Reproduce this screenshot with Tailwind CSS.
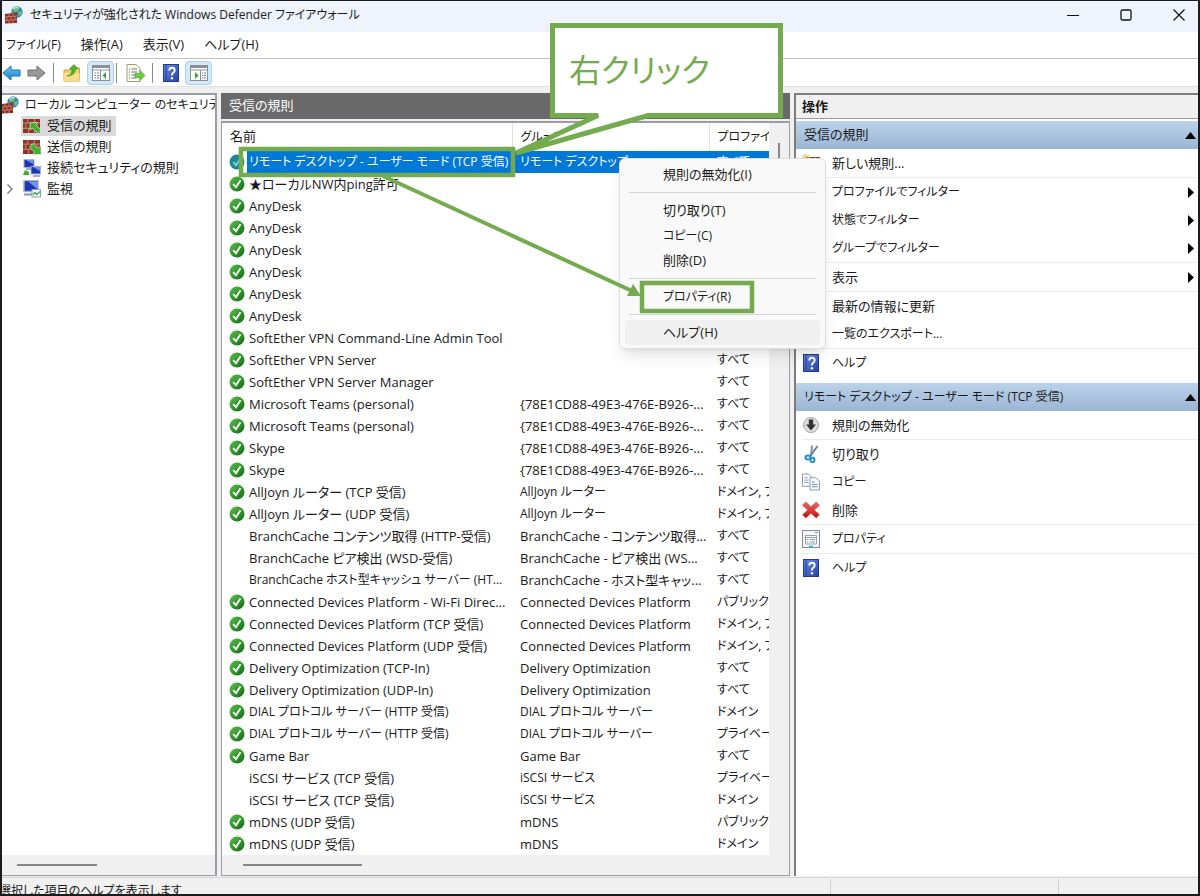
<!doctype html>
<html lang="ja">
    <head>
        <meta charset="UTF-8" />
        <meta name="viewport" content="width=device-width, initial-scale=1.0" />
        <title>セキュリティが強化された Windows Defender ファイアウォール</title>
        <script src="https://cdn.jsdelivr.net/npm/@tailwindcss/browser@4"></script>
        <style>
            body {
                font-family: "Open Sans", "Noto Sans CJK JP", sans-serif;
                font-feature-settings: "palt";
            }
        </style>
    </head>
    <body class="bg-[#f0f0f0] text-[13px] text-[#1a1a1a]">
        <!-- Icon sprites -->
        <svg class="absolute size-0">
            <defs>
                <linearGradient id="greenGrad" x1="0" y1="0" x2="1" y2="1">
                    <stop offset="0" stop-color="#5cc04c" />
                    <stop offset="1" stop-color="#0e6a12" />
                </linearGradient>
                <linearGradient id="blueGrad" x1="0" y1="0" x2="0" y2="1">
                    <stop offset="0" stop-color="#6cc8f6" />
                    <stop offset="1" stop-color="#1a7fcb" />
                </linearGradient>
                <linearGradient id="helpGrad" x1="0" y1="0" x2="1" y2="1">
                    <stop offset="0" stop-color="#6c8fe0" />
                    <stop offset="1" stop-color="#2440a8" />
                </linearGradient>
                <linearGradient id="redGrad" x1="0" y1="0" x2="0" y2="1">
                    <stop offset="0" stop-color="#ee6a64" />
                    <stop offset="1" stop-color="#c00d10" />
                </linearGradient>
            </defs>
            <symbol id="bricks" viewBox="0 0 18 12" preserveAspectRatio="none">
                <rect width="18" height="12" fill="#8c3527" />
                <path d="M0 3.5H18M0 8H18M5 0V3.5M12 0V3.5M3 3.5V8M9 3.5V8M15 3.5V8M6 8V12M12 8V12" stroke="#cf9c8c" stroke-width="0.8" />
            </symbol>
            <symbol id="firewall" viewBox="0 0 18 18">
                <circle cx="12" cy="6" r="5.7" fill="#2f86b8" />
                <path d="M9 2q3-2 5 0l-1 3-3 1-2-1zM13 6l4-1-1 4-2 1z" fill="#7cc26a" />
                <path d="M8 3q3-3 6-1" stroke="#d8f0f8" fill="none" />
                <path d="M0 8L12 6.500V17L0 17.500Z" fill="#8c2f22" />
                <path d="M0 11L12 10M0 14.500L12 13.500M4 8V11M8 7V10.500M2 11V14.500M6 11V14M10 10V13.500M4 14.500V17M8 14V17" stroke="#d39a8a" stroke-width="0.7" />
            </symbol>
            <symbol id="inbound" viewBox="0 0 18 16">
                <use href="#bricks" x="0" y="1" width="17" height="14" />
                <path d="M7 4.500L14.500 4.500L12.500 6.500L18 12L14.500 15.500L9.500 10L7 12Z" fill="#3db02e" stroke="#d9f2d2" stroke-width="0.7" />
            </symbol>
            <symbol id="outbound" viewBox="0 0 18 16">
                <use href="#bricks" x="0" y="1" width="17" height="14" />
                <path d="M18 15.500L9.500 15.500L11.500 13L6.500 8L10 4.500L15 9.500L18 6.500Z" fill="#3db02e" stroke="#d9f2d2" stroke-width="0.7" />
            </symbol>
            <symbol id="connection" viewBox="0 0 18 18">
                <rect x="1" y="0.500" width="10" height="8" fill="#1d37b4" stroke="#a9b2c4" />
                <path d="M3 1H10V5Z" fill="#6f93ee" />
                <path d="M3 10H9" stroke="#8b93a5" stroke-width="1.500" />
                <rect x="8" y="7.500" width="9.500" height="7.500" fill="#1d37b4" stroke="#a9b2c4" />
                <path d="M10 8H17V12Z" fill="#6f93ee" />
                <path d="M10 17H17" stroke="#8b93a5" stroke-width="1.500" />
                <path d="M0 16L2 11L6 13L6 16Z" fill="#3db02e" />
            </symbol>
            <symbol id="monitor" viewBox="0 0 18 18">
                <rect x="1" y="0.500" width="14" height="11" fill="#1d37b4" stroke="#a9b2c4" stroke-width="1.500" />
                <path d="M5 1.500H14.500V9Z" fill="#6f93ee" />
                <path d="M1 14.500H9" stroke="#8b93a5" stroke-width="2" />
                <rect x="9" y="9.500" width="8.500" height="7.500" fill="#f4faf4" stroke="#8fa3b5" />
                <path d="M10 14.500L12 12.500L14 14.500L17 11.500" stroke="#35a043" fill="none" stroke-width="1.200" />
            </symbol>
            <symbol id="check" viewBox="0 0 16 16">
                <circle cx="8" cy="8" r="7.500" fill="url(#greenGrad)" />
                <path d="M4.200 8.200L7 11.300L11.500 4.300" fill="none" stroke="#fff" stroke-width="1.900" />
            </symbol>
            <symbol id="checkSelected" viewBox="0 0 16 16">
                <circle cx="8" cy="8" r="7.500" fill="#1b8795" />
                <path d="M4.200 8.200L7 11.300L11.500 4.300" fill="none" stroke="#8fd0e0" stroke-width="1.900" />
            </symbol>
            <symbol id="book" viewBox="0 0 16 18">
                <rect x="0.500" y="0.500" width="15" height="17" fill="url(#helpGrad)" stroke="#24388c" />
                <path d="M3 1V17" stroke="#1f3a9c" />
                <path d="M6.300 6.500Q6.300 3.800 9 3.800T11.700 6.200Q11.700 7.700 10.200 8.700T9 11.500" fill="none" stroke="#fff" stroke-width="1.900" />
                <circle cx="9" cy="14.200" r="1.200" fill="#fff" />
            </symbol>
            <symbol id="arrowRight" viewBox="0 0 19 16">
                <path d="M1 5H10V1L18 8L10 15V11H1Z" fill="#999" stroke="#6e6e6e" />
            </symbol>
            <symbol id="arrowLeft" viewBox="0 0 19 16">
                <path d="M18 5H9V1L1 8L9 15V11H18Z" fill="url(#blueGrad)" stroke="#1c6fae" />
            </symbol>
            <symbol id="folderUp" viewBox="0 0 18 18">
                <path d="M1 6H7L8 4H16.500V17H1Z" fill="#f3cf6d" stroke="#c9a042" />
                <path d="M1 9H16.500V17H1Z" fill="#f9dd8c" />
                <path d="M4 12Q9 11 9 5H6.500L11 0.500L15 5H12.500Q12 12 4 12Z" fill="#4db52b" stroke="#328a18" stroke-width="0.600" />
            </symbol>
            <symbol id="paneLeft" viewBox="0 0 18 16">
                <rect x="0.500" y="0.500" width="17" height="15" fill="#fff" stroke="#8b8f96" />
                <path d="M1 2H17" stroke="#8b8f96" stroke-width="2" />
                <path d="M1 5H17M8.500 5V15" stroke="#8b8f96" />
                <path d="M2.500 8H4M5 8H7M2.500 10.500H4M5 10.500H7M2.500 13H4M5 13H7" stroke="#5c78a8" />
                <path d="M14 7V14L10.500 10.500Z" fill="#38a52c" />
            </symbol>
            <symbol id="paneRight" viewBox="0 0 18 16">
                <rect x="0.500" y="0.500" width="17" height="15" fill="#fff" stroke="#8b8f96" />
                <path d="M1 2H17" stroke="#8b8f96" stroke-width="2" />
                <path d="M1 5H17M10.500 5V15" stroke="#8b8f96" />
                <path d="M12 8H13.200M14 8H16M12 10.500H13.200M14 10.500H16M12 13H13.200M14 13H16" stroke="#5c78a8" />
                <path d="M5 7V14L8.500 10.500Z" fill="#38a52c" />
            </symbol>
            <symbol id="exportList" viewBox="0 0 20 18">
                <path d="M1 0.500H10L14 4V17.500H1Z" fill="#fffdee" stroke="#a09d86" />
                <path d="M3 5H4M5.500 5H11M3 8H4M5.500 8H11M3 11H4M5.500 11H10M3 14H4M5.500 14H10" stroke="#63718a" />
                <path d="M9 9.500H14V6.500L19 11.500L14 16.500V13.500H9Z" fill="#6fcf42" stroke="#47a41f" stroke-width="0.700" />
            </symbol>
            <symbol id="newRule" viewBox="0 0 18 18">
                <use href="#bricks" x="3" y="3" width="15" height="12" />
                <path d="M4 0V8M0 4H8M1 1L7 7M7 1L1 7" stroke="#f2a71f" />
            </symbol>
            <symbol id="disable" viewBox="0 0 18 18">
                <circle cx="9" cy="9" r="7.500" fill="#dcdcdc" stroke="#a8a8a8" />
                <path d="M6.800 3.500H11.200V8.500H14L9 14.500L4 8.500H6.800Z" fill="#333" />
            </symbol>
            <symbol id="cut" viewBox="0 0 18 18">
                <path d="M10 0.500L9 11" stroke="#8494a5" stroke-width="2" />
                <path d="M15.500 1L8 11.500" stroke="#68788c" stroke-width="1.800" />
                <ellipse cx="6" cy="12.500" rx="2.500" ry="2" fill="none" stroke="#1e90d2" stroke-width="2" />
                <ellipse cx="10.500" cy="15" rx="2" ry="2.200" fill="none" stroke="#1e90d2" stroke-width="2" />
            </symbol>
            <symbol id="copy" viewBox="0 0 19 18">
                <path d="M0.500 0.500H7L10.500 4V13.500H0.500Z" fill="#fff" stroke="#8d949c" />
                <path d="M2.500 4.500H6M2.500 7H7M2.500 9.500H7" stroke="#6f9bd2" />
                <path d="M8.500 4.500H14.500L18.500 8V17.500H8.500Z" fill="#fff" stroke="#8d949c" />
                <path d="M10.500 9H13.500M10.500 11.500H16.500M10.500 14H16.500" stroke="#4d86cc" />
            </symbol>
            <symbol id="delete" viewBox="0 0 19 18">
                <path d="M4 0.500L9.500 5.500L15 0.500L18.500 4L13 9L18.500 14L15 17.500L9.500 12.500L4 17.500L0.500 14L6 9L0.500 4Z" fill="url(#redGrad)" stroke="#d0433f" stroke-width="0.600" />
            </symbol>
            <symbol id="props" viewBox="0 0 18 18">
                <rect x="0.500" y="0.500" width="17" height="17" fill="#f4f6f8" stroke="#848b92" />
                <path d="M13 2.500H16" stroke="#848b92" />
                <path d="M3.500 5.500H14.500V14H3.500ZM3.500 7.500H14.500" fill="#fff" stroke="#9aa1a8" />
                <path d="M5 9.500H6.500M8 9.500H13M5 12H6.500M8 12H13" stroke="#7f93ab" />
                <path d="M7 16.500H11" stroke="#2eb4d8" stroke-width="1.500" />
            </symbol>
        </svg>

        <div class="relative flex h-screen flex-col overflow-hidden border-2 border-t border-[#1c1c1c]">
            <!-- Title bar -->
            <header class="flex h-[31px] shrink-0 items-center gap-[15px] bg-[#eff3fb] pb-1 pl-[3px]">
                <svg class="size-[18px]"><use href="#firewall" /></svg>
                <h1 class="-ml-2 flex-1 text-xs">セキュリティが強化された Windows Defender ファイアウォール</h1>
                <button aria-label="最小化" class="grid h-full w-[38px] place-items-center">
                    <svg class="size-3" viewBox="0 0 12 12" stroke="#111"><path d="M0 6.500H12" /></svg>
                </button>
                <button aria-label="最大化" class="grid h-full w-[38px] place-items-center">
                    <svg class="size-3" viewBox="0 0 12 12" fill="none" stroke="#111" stroke-width="1.300"><rect x="1" y="1" width="10" height="10" rx="1.500" /></svg>
                </button>
                <button aria-label="閉じる" class="grid h-full w-[38px] place-items-center">
                    <svg class="size-3" viewBox="0 0 12 12" stroke="#111" stroke-width="1.200"><path d="M0.500 0.500L11.500 11.500M11.500 0.500L0.500 11.500" /></svg>
                </button>
            </header>

            <!-- Menu bar -->
            <nav class="flex h-[27px] shrink-0 items-center gap-5 border-b border-[#bfbfbf] bg-white pl-1">
                <button class="text-xs">ファイル(F)</button>
                <button>操作(A)</button>
                <button>表示(V)</button>
                <button>ヘルプ(H)</button>
            </nav>

            <!-- Toolbar -->
            <div class="flex h-7 shrink-0 items-center border-b border-[#e2e2e2] bg-white">
                <button aria-label="戻る"><svg class="h-4 w-[19px]"><use href="#arrowLeft" /></svg></button>
                <button aria-label="進む" class="ml-[6px]"><svg class="h-4 w-[19px]"><use href="#arrowRight" /></svg></button>
                <span class="ml-[7px] h-5 w-px bg-[#8c8c8c]"></span>
                <button aria-label="上へ" class="ml-[9px]"><svg class="size-[18px]"><use href="#folderUp" /></svg></button>
                <button aria-label="コンソール ツリーの表示" class="ml-[6px] grid h-6 w-[27px] place-items-center rounded-sm border border-[#a8d2f2] bg-[#d3e9fa]">
                    <svg class="h-4 w-[18px]"><use href="#paneLeft" /></svg>
                </button>
                <span class="ml-[2px] h-5 w-px bg-[#8c8c8c]"></span>
                <button aria-label="一覧のエクスポート" class="ml-[9px]"><svg class="h-[18px] w-5"><use href="#exportList" /></svg></button>
                <span class="ml-[6px] h-5 w-px bg-[#8c8c8c]"></span>
                <button aria-label="ヘルプ" class="ml-[10px]"><svg class="h-[18px] w-4"><use href="#book" /></svg></button>
                <button aria-label="操作ウィンドウの表示" class="ml-[6px] grid h-6 w-[27px] place-items-center rounded-sm border border-[#a8d2f2] bg-[#d3e9fa]">
                    <svg class="h-4 w-[18px]"><use href="#paneRight" /></svg>
                </button>
            </div>

            <main class="flex min-h-0 flex-1 gap-1 pt-[6px]">
                <!-- Console tree -->
                <aside class="flex w-[215px] shrink-0 flex-col border-t-2 border-r-2 border-b border-[#9a9da3] bg-white">
                    <ul class="flex-1 overflow-hidden whitespace-nowrap">
                        <li class="flex h-5 items-center">
                            <svg class="-ml-px size-[18px] shrink-0"><use href="#firewall" /></svg>
                            <button class="ml-[6px] text-xs">ローカル コンピューター のセキュリティが</button>
                        </li>
                        <li class="flex h-[21px] items-center pl-[19px]">
                            <button class="flex h-5 items-center gap-[6px] bg-[#d9d9d9] pr-1 pl-[2px]">
                                <svg class="h-4 w-[18px]"><use href="#inbound" /></svg>受信の規則
                            </button>
                        </li>
                        <li class="flex h-[21px] items-center pl-[21px]">
                            <button class="flex items-center gap-[6px]">
                                <svg class="h-4 w-[18px]"><use href="#outbound" /></svg>送信の規則
                            </button>
                        </li>
                        <li class="flex h-[21px] items-center pl-[21px]">
                            <button class="flex items-center gap-[6px]">
                                <svg class="size-[18px]"><use href="#connection" /></svg>接続セキュリティの規則
                            </button>
                        </li>
                        <li class="flex h-[21px] items-center pl-1">
                            <svg class="mr-[9px] h-[10px] w-2" viewBox="0 0 8 10" fill="none" stroke="#777" stroke-width="1.300"><path d="M1.500 0.500L6 5L1.500 9.500" /></svg>
                            <button class="flex items-center gap-[6px]">
                                <svg class="size-[18px]"><use href="#monitor" /></svg>監視
                            </button>
                        </li>
                    </ul>
                    <div class="flex h-5 items-center bg-[#f0f0f0] pl-[15px]">
                        <span class="h-[2px] w-20 bg-[#868686]"></span>
                    </div>
                </aside>

                <!-- Rule list -->
                <section class="flex w-[569px] shrink-0 flex-col">
                    <h2 class="flex h-[26px] shrink-0 items-center bg-[#696969] pl-2 text-white">受信の規則</h2>
                    <div class="mt-[2px] flex min-h-0 flex-1 flex-col border border-t-2 border-[#9a9da3] bg-[#f0f0f0]">
                        <div class="flex min-h-0 flex-1">
                            <div class="min-w-0 flex-1 overflow-hidden bg-white">
                                <table class="w-full table-fixed">
                                    <thead>
                                        <tr class="h-7 text-left">
                                            <th class="w-[290px] border-r border-[#e3e3e3] pl-2 font-normal">名前</th>
                                            <th class="w-[197px] border-r border-[#e3e3e3] pl-2 text-xs font-normal">グループ</th>
                                            <th class="overflow-hidden pl-2 text-xs font-normal whitespace-nowrap">プロファイル</th>
                                        </tr>
                                    </thead>
                                    <tbody id="ruleRows"></tbody>
                                </table>
                            </div>
                            <div class="flex w-5 justify-center pt-5">
                                <span class="h-40 w-[2px] bg-[#868686]"></span>
                            </div>
                        </div>
                        <div class="flex h-5 shrink-0 items-center pl-[21px]">
                            <span class="h-[2px] w-[119px] bg-[#868686]"></span>
                        </div>
                    </div>
                </section>

                <!-- Actions -->
                <aside class="min-w-0 flex-1 border-t-2 border-l-2 border-[#7d7d7d] bg-white">
                    <h2 class="flex h-6 items-center border-b border-[#9a9da3] bg-[#f0f0f0] pl-[6px] font-semibold">操作</h2>
                    <button class="mt-[2px] flex h-7 w-full items-center justify-between bg-linear-to-b from-[#bcd2ea] to-[#9ab5d4] pr-[2px] pl-2">
                        受信の規則
                        <svg class="h-[7px] w-[11px]"><path d="M0 7L5.500 0L11 7Z" /></svg>
                    </button>
                    <div id="ruleActions" class="pl-[6px]"></div>
                    <button class="mt-[6px] flex h-7 w-full items-center justify-between bg-linear-to-b from-[#bcd2ea] to-[#9ab5d4] pr-[2px] pl-2 text-xs">
                        リモート デスクトップ - ユーザー モード (TCP 受信)
                        <svg class="h-[7px] w-[11px]"><path d="M0 7L5.500 0L11 7Z" /></svg>
                    </button>
                    <div id="itemActions" class="pl-[6px]"></div>
                </aside>
            </main>

            <!-- Status bar -->
            <footer class="mt-[1px] flex h-[17px] shrink-0 border-t border-[#d5d5d5] pt-px">
                <p class="-ml-[3px] flex-1 overflow-hidden text-xs leading-6 whitespace-nowrap">選択した項目のヘルプを表示します</p>
                <span class="w-[228px] border-l border-[#d0d0d0]"></span>
                <span class="w-[140px] border-l border-[#d0d0d0]"></span>
            </footer>

            <!-- Context menu -->
            <div role="menu" class="absolute top-[157px] left-[617px] flex w-[207px] flex-col rounded-md border border-[#dedede] bg-[#f9f9f9] px-[5px] py-[3px] shadow-lg">
                <button role="menuitem" class="h-[25px] pl-[38px] text-left">規則の無効化(I)</button>
                <hr class="mx-1 my-[5px] border-[#d4d4d4]" />
                <button role="menuitem" class="h-[25px] pl-[38px] text-left">切り取り(T)</button>
                <button role="menuitem" class="h-[25px] pl-[38px] text-left text-xs">コピー(C)</button>
                <button role="menuitem" class="h-[25px] pl-[38px] text-left">削除(D)</button>
                <hr class="mx-1 my-[5px] border-[#d4d4d4]" />
                <button role="menuitem" class="h-[25px] pl-[38px] text-left text-xs">プロパティ(R)</button>
                <hr class="mx-1 my-[5px] border-[#d4d4d4]" />
                <button role="menuitem" class="h-[25px] rounded bg-[#f0f0f0] pl-[38px] text-left">ヘルプ(H)</button>
            </div>

            <!-- Annotations -->
            <svg class="pointer-events-none absolute -top-px -left-[2px] h-[896px] w-[1200px]" fill="none" stroke="#74ab4f">
                <path d="M552.500 25.500H780.500V115.500H648L516 153L598 115.500H552.500Z" fill="#fff" stroke-width="5" />
                <rect x="241" y="149" width="272" height="26" stroke-width="4.500" />
                <path d="M383 176L632 291" stroke-width="4" />
                <path d="M641 296L627 296L633 284Z" fill="#74ab4f" stroke="none" />
                <rect x="642" y="283" width="110" height="28" stroke-width="4.500" />
            </svg>
            <p class="absolute top-[45px] left-[567px] text-[32px] leading-[48px] text-[#74ab4f]">右クリック</p>
        </div>

        <script>
            // [name, group, profile, enabled]
            const rules = [
                ["リモート デスクトップ - ユーザー モード (TCP 受信)", "リモート デスクトップ", "すべて", true],
                ["★ローカルNW内ping許可", "", "すべて", true],
                ["AnyDesk", "", "すべて", true],
                ["AnyDesk", "", "すべて", true],
                ["AnyDesk", "", "すべて", true],
                ["AnyDesk", "", "すべて", true],
                ["AnyDesk", "", "すべて", true],
                ["AnyDesk", "", "すべて", true],
                ["SoftEther VPN Command-Line Admin Tool", "", "すべて", true],
                ["SoftEther VPN Server", "", "すべて", true],
                ["SoftEther VPN Server Manager", "", "すべて", true],
                ["Microsoft Teams (personal)", "{78E1CD88-49E3-476E-B926-...", "すべて", true],
                ["Microsoft Teams (personal)", "{78E1CD88-49E3-476E-B926-...", "すべて", true],
                ["Skype", "{78E1CD88-49E3-476E-B926-...", "すべて", true],
                ["Skype", "{78E1CD88-49E3-476E-B926-...", "すべて", true],
                ["AllJoyn ルーター (TCP 受信)", "AllJoyn ルーター", "ドメイン, プ", true],
                ["AllJoyn ルーター (UDP 受信)", "AllJoyn ルーター", "ドメイン, プ", true],
                ["BranchCache コンテンツ取得 (HTTP-受信)", "BranchCache - コンテンツ取得...", "すべて", false],
                ["BranchCache ピア検出 (WSD-受信)", "BranchCache - ピア検出 (WS...", "すべて", false],
                ["BranchCache ホスト型キャッシュ サーバー (HT...", "BranchCache - ホスト型キャッ...", "すべて", false],
                ["Connected Devices Platform - Wi-Fi Direc...", "Connected Devices Platform", "パブリック", true],
                ["Connected Devices Platform (TCP 受信)", "Connected Devices Platform", "ドメイン, プ", true],
                ["Connected Devices Platform (UDP 受信)", "Connected Devices Platform", "ドメイン, プ", true],
                ["Delivery Optimization (TCP-In)", "Delivery Optimization", "すべて", true],
                ["Delivery Optimization (UDP-In)", "Delivery Optimization", "すべて", true],
                ["DIAL プロトコル サーバー (HTTP 受信)", "DIAL プロトコル サーバー", "ドメイン", true],
                ["DIAL プロトコル サーバー (HTTP 受信)", "DIAL プロトコル サーバー", "プライベー", true],
                ["Game Bar", "Game Bar", "すべて", true],
                ["iSCSI サービス (TCP 受信)", "iSCSI サービス", "プライベー", false],
                ["iSCSI サービス (TCP 受信)", "iSCSI サービス", "ドメイン", false],
                ["mDNS (UDP 受信)", "mDNS", "パブリック", true],
                ["mDNS (UDP 受信)", "mDNS", "ドメイン", true],
            ];

            function textSize(label) {
                const kana = label.match(/[ァ-ー]/g) || [];
                return kana.length / label.length > 0.3 ? "text-xs leading-[inherit]" : "";
            }

            document.getElementById("ruleRows").innerHTML = rules
                .map(([name, group, profile, enabled], i) => {
                    const selected = i === 0;
                    const cell = selected ? "bg-[#0078d7] text-white" : "";
                    const icon = selected ? "#checkSelected" : "#check";
                    return `
                        <tr class="h-[22px] leading-[22px] whitespace-nowrap">
                            <td class="flex h-[22px] items-center pl-[7px]">
                                <span class="w-[18px] shrink-0">${enabled ? `<svg class="size-4"><use href="${icon}" /></svg>` : ""}</span>
                                <span class="min-w-0 flex-1 truncate pl-[2px] ${textSize(name)} ${cell}">${name}</span>
                            </td>
                            <td class="truncate pl-2 ${textSize(group)} ${cell}">${group}</td>
                            <td class="overflow-hidden pl-2 text-xs leading-[inherit] ${cell}">${profile}</td>
                        </tr>`;
                })
                .join("");

            // [label, icon, has submenu, divider below]
            const ruleActions = [
                ["新しい規則...", "#newRule", false, true],
                ["プロファイルでフィルター", "", true, false],
                ["状態でフィルター", "", true, false],
                ["グループでフィルター", "", true, true],
                ["表示", "", true, true],
                ["最新の情報に更新", "", false, false],
                ["一覧のエクスポート...", "", false, true],
                ["ヘルプ", "#book", false, false],
            ];
            const itemActions = [
                ["規則の無効化", "#disable", false, true],
                ["切り取り", "#cut", false, false],
                ["コピー", "#copy", false, false],
                ["削除", "#delete", false, true],
                ["プロパティ", "#props", false, true],
                ["ヘルプ", "#book", false, false],
            ];

            function renderActions(id, actions) {
                document.getElementById(id).innerHTML = actions
                    .map(
                        ([label, icon, submenu, divider]) => `
                        <button class="flex w-full items-center pr-1 text-left leading-7 ${divider ? "border-b border-[#ececec]" : ""}">
                            <span class="w-[30px]">${icon ? `<svg class="size-[18px]"><use href="${icon}" /></svg>` : ""}</span>
                            <span class="flex-1 ${textSize(label)}">${label}</span>
                            ${submenu ? `<svg class="h-[11px] w-[6px]"><path d="M0 0L6 5.500L0 11Z" /></svg>` : ""}
                        </button>`,
                    )
                    .join("");
            }

            renderActions("ruleActions", ruleActions);
            renderActions("itemActions", itemActions);
        </script>
    </body>
</html>
